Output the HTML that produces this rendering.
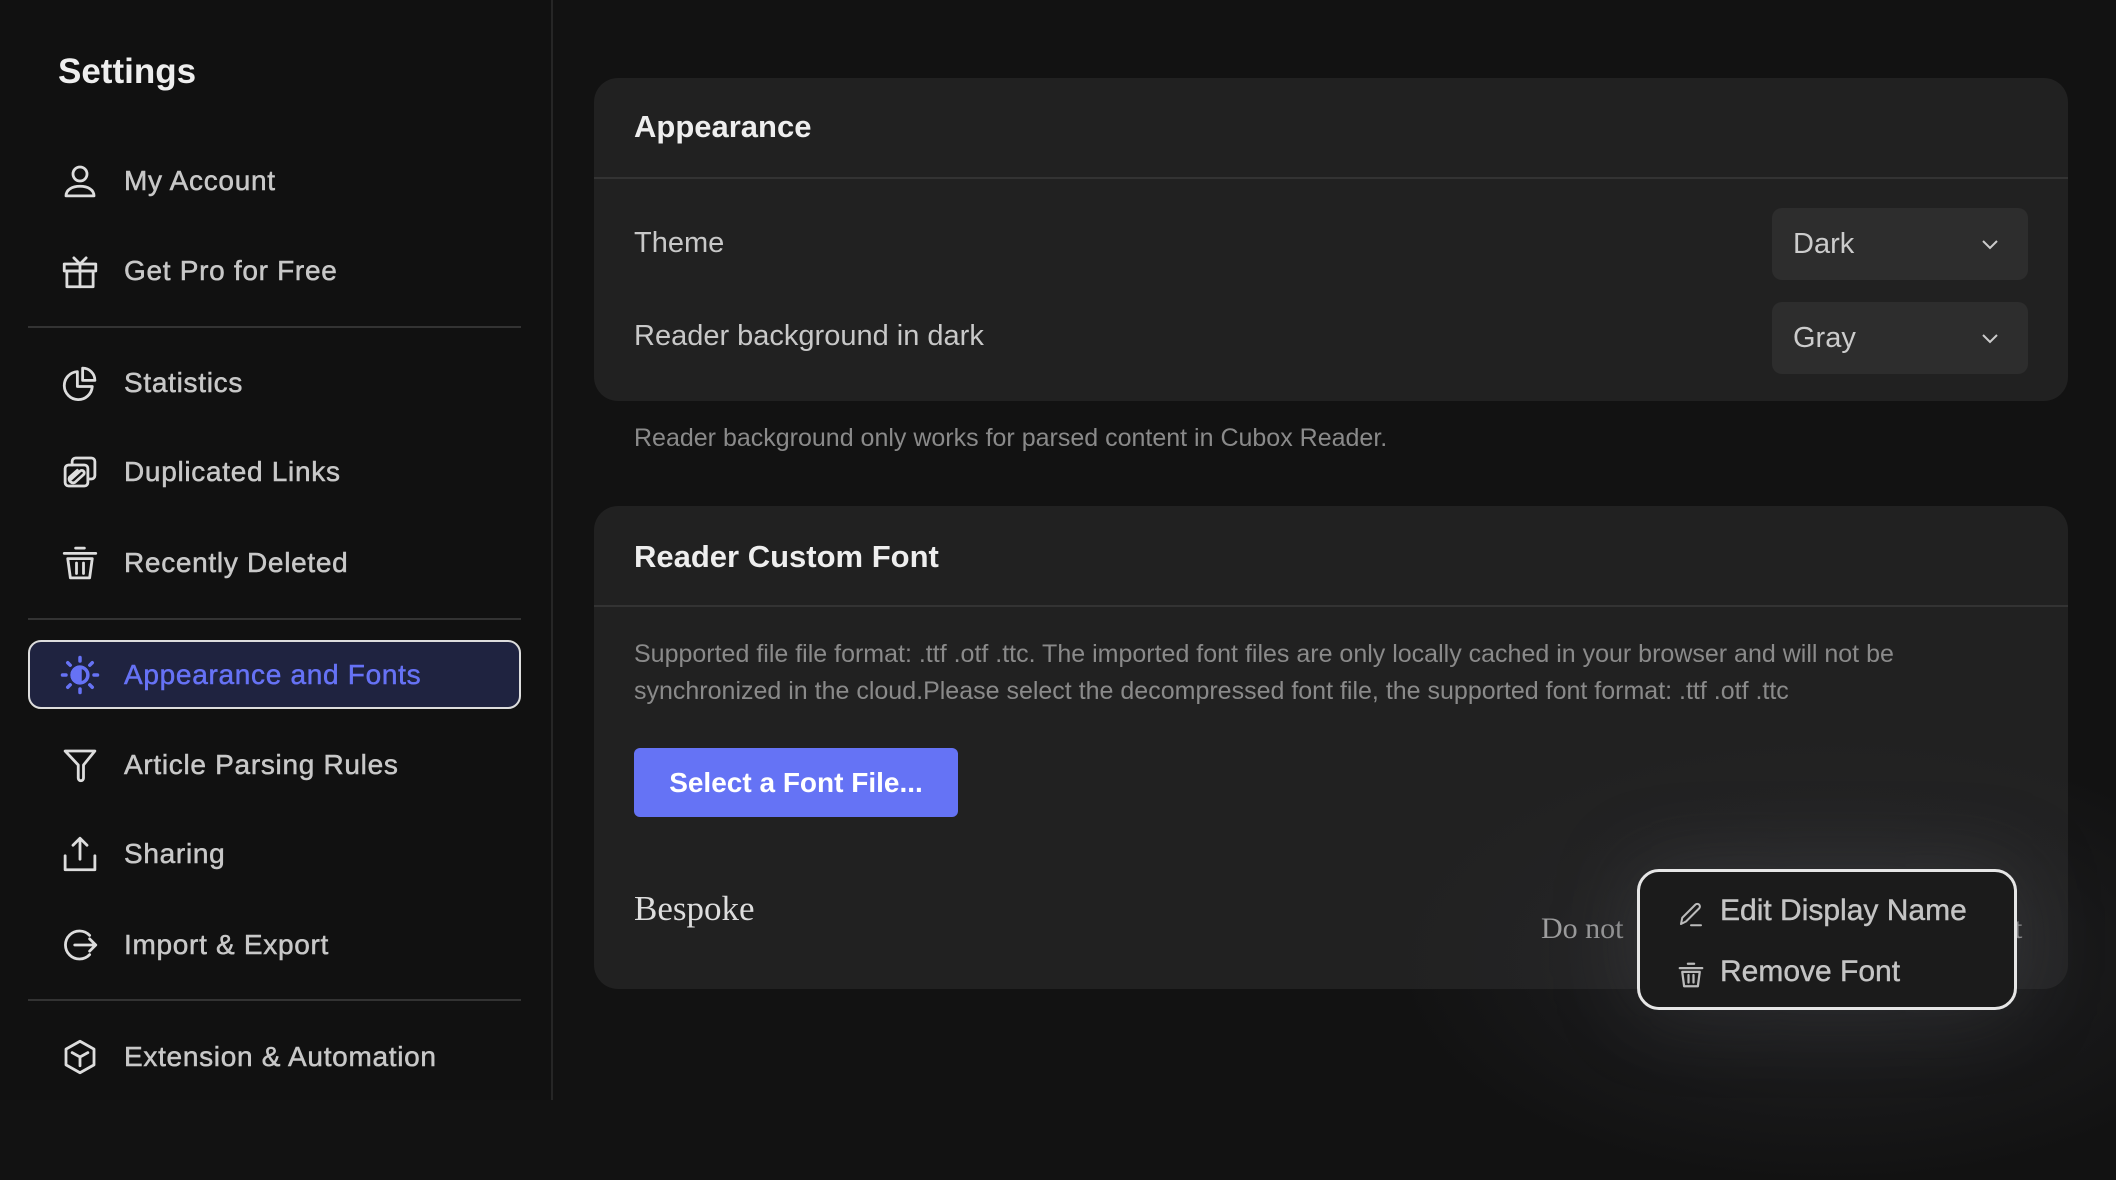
<!DOCTYPE html>
<html><head><meta charset="utf-8"><style>
*{margin:0;padding:0;box-sizing:border-box}
body{width:2116px;height:1100px;background:#121212;font-family:"Liberation Sans","Noto Sans CJK SC",sans-serif;position:relative;overflow:hidden;color:#ccc}
.abs{position:absolute}
.side{left:0;top:0;width:553px;height:1100px;background:#111;border-right:2px solid #262626}
.title{left:58px;top:52px;font-size:35px;font-weight:bold;color:#eee}
.item{position:absolute;left:0;width:553px;height:60px;display:flex;align-items:center}
.item svg{position:absolute;left:59px;width:42px;height:42px;fill:none;stroke:#ddd;stroke-width:1.6;stroke-linecap:round;stroke-linejoin:round}
.item span{position:absolute;left:124px;font-size:28px;color:#c8c8c8;letter-spacing:0.7px;-webkit-text-stroke:0.5px #c8c8c8}
.div{position:absolute;left:28px;width:493px;height:2px;background:#333}
.active{left:28px;top:640px;width:493px;height:69px;border:2.5px solid #ddd;border-radius:13px;background:#1f2340}
.card{background:#212121;border-radius:24px;position:absolute;left:594px;width:1474px}
.ch{position:absolute;left:40px;font-size:31px;font-weight:bold;color:#eee}
.hl{position:absolute;left:0;right:0;height:2px;background:#333}
.lbl{position:absolute;left:40px;font-size:29px;color:#c8c8c8}
.sel{position:absolute;left:1178px;width:256px;height:72px;background:#2d2d2d;border-radius:10px}
.sel span{position:absolute;left:21px;top:20px;font-size:29px;color:#ccc}
.sel svg{position:absolute;left:206px;top:24px;width:24px;height:24px;fill:none;stroke:#ccc;stroke-width:2}
.note{font-size:25px;color:#8a8a8a}
</style></head><body>
<div class="abs side"></div>
<div class="abs title">Settings</div>

<div class="abs active"></div>

<div class="item" style="top:151px"><svg viewBox="0 0 24 24"><circle cx="12" cy="8" r="4"/><path d="M4 20.5c0-3.5 3.5-5.5 8-5.5s8 2 8 5.5z"/></svg><span>My Account</span></div>
<div class="item" style="top:241px"><svg viewBox="0 0 24 24"><rect x="3" y="8" width="18" height="4"/><rect x="4.5" y="12" width="15" height="9"/><path d="M12 8v13M8.5 4.5L12 8l3.5-3.5"/></svg><span>Get Pro for Free</span></div>
<div class="div" style="top:326px"></div>
<div class="item" style="top:353px"><svg viewBox="0 0 24 24"><path d="M10.5 5.5a8 8 0 1 0 8.5 8.5h-8.5z"/><path d="M13.5 3.5v7h7a7 7 0 0 0-7-7z"/></svg><span>Statistics</span></div>
<div class="item" style="top:442px"><svg viewBox="0 0 24 24"><rect x="3.5" y="8" width="13" height="12" rx="2"/><path d="M7.5 8V6a2 2 0 0 1 2-2h9a2 2 0 0 1 2 2v8a2 2 0 0 1-2 2h-2"/><path d="M7 16l5-4.5a1.4 1.4 0 0 1 2 2L9 18a2.3 2.3 0 0 1-3-3l4.5-4"/></svg><span>Duplicated Links</span></div>
<div class="item" style="top:533px"><svg viewBox="0 0 24 24"><path d="M3 6.5h18M9.5 3.5h5M5 9.5h14l-1.5 11h-11z"/><path d="M10 12v6M14 12v6"/></svg><span>Recently Deleted</span></div>
<div class="div" style="top:618px"></div>
<div class="item" style="top:645px"><svg viewBox="0 0 24 24" style="stroke:#6672f5;stroke-width:2"><circle cx="12" cy="12" r="4.5"/><path d="M12 7.5a4.5 4.5 0 0 0 0 9z" fill="#6672f5"/><path d="M12 2v2M12 20v2M2 12h2M20 12h2M5 5l1.4 1.4M17.6 17.6L19 19M5 19l1.4-1.4M17.6 6.4L19 5"/></svg><span style="color:#6672f5;-webkit-text-stroke:0.5px #6672f5">Appearance and Fonts</span></div>
<div class="item" style="top:735px"><svg viewBox="0 0 24 24"><path d="M3.5 4h17l-6.5 8v7.5a1.5 1.5 0 0 1-3 0V12z"/></svg><span>Article Parsing Rules</span></div>
<div class="item" style="top:824px"><svg viewBox="0 0 24 24"><path d="M3.5 13v8h17v-8M12 3v12M8 7l4-4 4 4"/></svg><span>Sharing</span></div>
<div class="item" style="top:915px"><svg viewBox="0 0 24 24"><path d="M17.5 6.5A8 8 0 1 0 17.5 17.5"/><path d="M9 12h12M17.5 8.5L21 12l-3.5 3.5"/></svg><span>Import &amp; Export</span></div>
<div class="div" style="top:999px"></div>
<div class="item" style="top:1027px"><svg viewBox="0 0 24 24"><path d="M12 3l8 4.5v9L12 21l-8-4.5v-9z"/><path d="M7.5 9.5L12 12l4.5-2.5M12 12v5"/></svg><span>Extension &amp; Automation</span></div>

<div class="card" style="top:78px;height:323px">
  <div class="ch" style="top:31px">Appearance</div>
  <div class="hl" style="top:99px"></div>
  <div class="lbl" style="top:149px">Theme</div>
  <div class="lbl" style="top:242px">Reader background in dark</div>
  <div class="sel" style="top:130px"><span>Dark</span><svg viewBox="0 0 24 24"><path d="M5 9l7 7 7-7"/></svg></div>
  <div class="sel" style="top:224px"><span>Gray</span><svg viewBox="0 0 24 24"><path d="M5 9l7 7 7-7"/></svg></div>
</div>
<div class="abs note" style="left:634px;top:424px">Reader background only works for parsed content in Cubox Reader.</div>

<div class="card" style="top:506px;height:483px">
  <div class="ch" style="top:33px">Reader Custom Font</div>
  <div class="hl" style="top:99px"></div>
  <div class="abs note" style="left:40px;top:130px;width:1330px;line-height:37px">Supported file file format: .ttf .otf .ttc. The imported font files are only locally cached in your browser and will not be synchronized in the cloud.Please select the decompressed font file, the supported font format: .ttf .otf .ttc</div>
  <div class="abs" style="left:40px;top:242px;width:324px;height:69px;background:#6573f5;border-radius:6px;color:#fff;font-size:28px;font-weight:bold;line-height:69px;text-align:center">Select a Font File...</div>
  <div class="abs" style="left:40px;top:383px;font-family:'Liberation Serif',serif;font-size:35px;color:#ddd">Bespoke</div>
  <div class="abs" style="left:947px;top:406px;font-family:'Liberation Serif',serif;font-size:30px;color:#bbb">Do not</div>
  <div class="abs" style="left:1420px;top:406px;font-family:'Liberation Serif',serif;font-size:30px;color:#bbb">t</div>
</div>

<div class="abs" style="left:1400px;top:740px;width:860px;height:440px;border-radius:50%;background:radial-gradient(ellipse at center,rgba(62,64,68,0.4) 0%,rgba(42,42,46,0.2) 50%,rgba(0,0,0,0) 72%)"></div>

<div class="abs" style="left:1637px;top:869px;width:380px;height:141px;background:#1b1b1b;border:3.5px solid #e6e6e6;border-radius:22px;box-shadow:0 0 80px rgba(70,70,75,0.4)">
  <svg class="abs" style="left:36px;top:27px;width:30px;height:30px;fill:none;stroke:#bbb;stroke-width:1.6;stroke-linecap:round;stroke-linejoin:round" viewBox="0 0 24 24"><path d="M4 20l1-5L15.5 4.5a2 2 0 0 1 3 3L8 18z"/><path d="M12 21h8"/></svg>
  <svg class="abs" style="left:36px;top:88px;width:30px;height:30px;fill:none;stroke:#bbb;stroke-width:1.8;stroke-linecap:round;stroke-linejoin:round" viewBox="0 0 24 24"><path d="M3 6.5h18M9.5 3h5M5 9.5h14l-1.5 11.5h-11z"/><path d="M10 12v6M14 12v6"/></svg>
  <div class="abs" style="left:80px;top:22px;font-size:30px;color:#c4c4c4;-webkit-text-stroke:0.4px #c4c4c4">Edit Display Name</div>
  <div class="abs" style="left:80px;top:83px;font-size:30px;color:#c4c4c4;-webkit-text-stroke:0.4px #c4c4c4">Remove Font</div>
</div>
</body></html>
